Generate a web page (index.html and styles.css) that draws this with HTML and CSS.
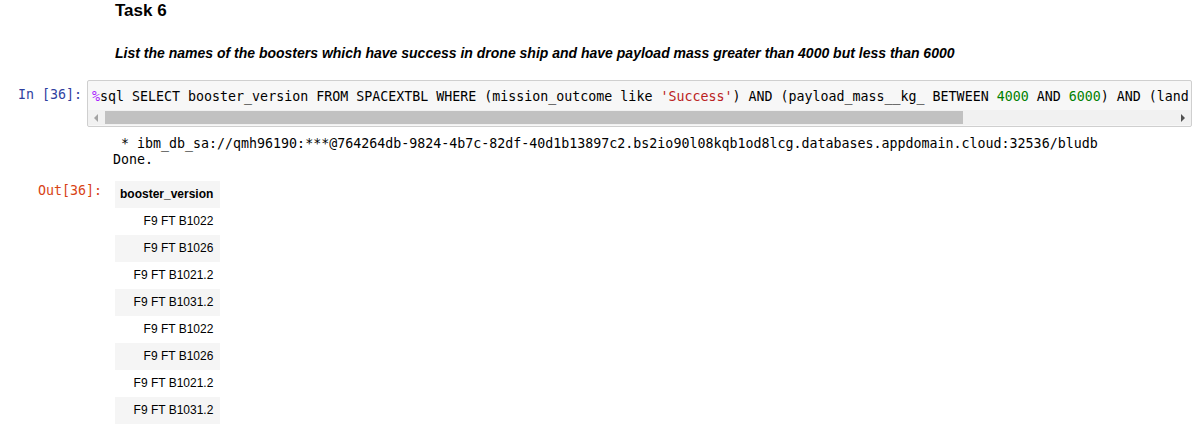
FILE: index.html
```html
<!DOCTYPE html>
<html>
<head>
<meta charset="utf-8">
<link rel="stylesheet" href="styles.css">
</head>
<body>
<div class="md">
  <h2 class="task">Task 6</h2>
  <p class="question">List the names of the boosters which have success in drone ship and have payload mass greater than 4000 but less than 6000</p>
</div>
<div class="cell">
  <div class="prompt in">In&nbsp;[36]:</div>
  <div class="input">
    <div class="code"><span class="mg">%</span>sql SELECT booster_version FROM SPACEXTBL WHERE (mission_outcome like <span class="str">'Success'</span>) AND (payload_mass__kg_ BETWEEN <span class="num">4000</span> AND <span class="num">6000</span>) AND (land</div>
    <div class="hscroll">
      <div class="arrow left"></div>
      <div class="track"><div class="thumb"></div></div>
      <div class="arrow right"></div>
    </div>
  </div>
</div>
<div class="outrow">
  <div class="prompt blank"></div>
  <pre class="stdout"> * ibm_db_sa://qmh96190:***@764264db-9824-4b7c-82df-40d1b13897c2.bs2io90l08kqb1od8lcg.databases.appdomain.cloud:32536/bludb
Done.</pre>
</div>
<div class="outrow">
  <div class="prompt out">Out[36]:</div>
  <table class="df">
    <thead><tr><th>booster_version</th></tr></thead>
    <tbody>
      <tr><td>F9 FT B1022</td></tr>
      <tr><td>F9 FT B1026</td></tr>
      <tr><td>F9 FT B1021.2</td></tr>
      <tr><td>F9 FT B1031.2</td></tr>
      <tr><td>F9 FT B1022</td></tr>
      <tr><td>F9 FT B1026</td></tr>
      <tr><td>F9 FT B1021.2</td></tr>
      <tr><td>F9 FT B1031.2</td></tr>
    </tbody>
  </table>
</div>
</body>
</html>
```
FILE: styles.css
```css
html, body {
  margin: 0;
  padding: 0;
  background: #fff;
  font-family: "Liberation Sans", Arial, sans-serif;
  color: #000;
  overflow: hidden;
}
.md {
  padding-left: 115px;
}
.task {
  margin: 0;
  padding-top: 1px;
  font-size: 17px;
  font-weight: bold;
  line-height: 20px;
}
.question {
  margin: 24px 0 0 0;
  font-size: 14px;
  font-weight: bold;
  font-style: italic;
  line-height: 16px;
}
.cell {
  display: flex;
  margin-top: 19px;
}
.prompt {
  flex: none;
  font-family: "DejaVu Sans Mono", monospace;
  font-size: 13.3px;
  text-align: right;
  box-sizing: border-box;
}
.prompt.in {
  width: 87px;
  padding-right: 5px;
  padding-top: 7px;
  color: #303f9f;
}
.input {
  width: 1103px;
  border: 1px solid #cfcfcf;
  border-radius: 2px;
  background: #f7f7f7;
  overflow: hidden;
}
.code {
  font-family: "DejaVu Sans Mono", monospace;
  font-size: 13.3px;
  line-height: 17px;
  white-space: pre;
  overflow: hidden;
  padding: 7px 0 5px 4px;
}
.mg { color: #aa22ff; }
.str { color: #ba2121; }
.num { color: #008000; }
.hscroll {
  display: flex;
  height: 15px;
  background: #f1f1f1;
  margin-bottom: 1px;
}
.arrow {
  width: 17px;
  flex: none;
  position: relative;
}
.arrow::after {
  content: "";
  position: absolute;
  top: 4px;
  width: 0;
  height: 0;
  border-top: 4px solid transparent;
  border-bottom: 4px solid transparent;
}
.arrow.left::after {
  left: 6px;
  border-right: 4px solid #a3a3a3;
}
.arrow.right::after {
  left: 7px;
  border-left: 4px solid #505050;
}
.track {
  flex: 1;
  padding: 1px 0;
}
.thumb {
  width: 858px;
  height: 100%;
  background: #c1c1c1;
}
.outrow {
  display: flex;
}
.prompt.blank {
  width: 113px;
}
.stdout {
  margin: 0;
  padding-top: 9px;
  font-family: "DejaVu Sans Mono", monospace;
  font-size: 13.3px;
  line-height: 16px;
}
.prompt.out {
  width: 115px;
  padding-right: 13px;
  padding-top: 15px;
  color: #d84315;
}
.df {
  margin-top: 13px;
  border-collapse: collapse;
  font-size: 12px;
  margin-bottom: 20px;
}
.df th, .df td {
  text-align: right;
  padding: 0 7px 0 5px;
  height: 27px;
  line-height: 27px;
}
.df th {
  font-weight: bold;
  background: #f5f5f5;
}
.df tbody tr:nth-child(even) {
  background: #f5f5f5;
}
```
